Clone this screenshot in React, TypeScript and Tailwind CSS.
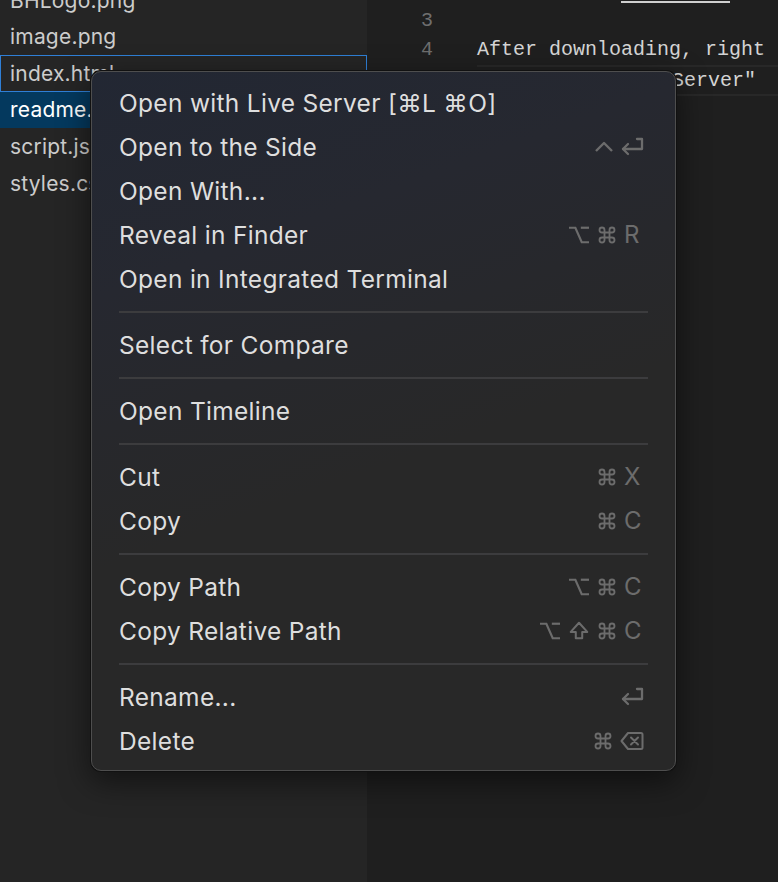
import React from "react";

const G = "#6c6c6c";

function Cmd() {
  return (
    <svg width="20" height="20" viewBox="0 0 24 24" fill="none" stroke={G} strokeWidth="2.2" strokeLinecap="round" strokeLinejoin="round">
      <path d="M15 6v12a3 3 0 1 0 3-3H6a3 3 0 1 0 3 3V6a3 3 0 1 0-3 3h12a3 3 0 1 0-3-3" />
    </svg>
  );
}
function Opt() {
  return (
    <svg width="22" height="20" viewBox="0 0 24 22" fill="none" stroke={G} strokeWidth="2.4" strokeLinejoin="miter">
      <path d="M1 3h7l7 16h8" />
      <path d="M14 3h9" />
    </svg>
  );
}
function Shift() {
  return (
    <svg width="22" height="22" viewBox="0 0 24 24" fill="none" stroke={G} strokeWidth="2.2" strokeLinejoin="round">
      <path d="M8.5 20v-7H3l9-10 9 10h-5.5v7z" />
    </svg>
  );
}
function Ctrl() {
  return (
    <svg width="18" height="12" viewBox="0 0 18 12" fill="none" stroke={G} strokeWidth="2.4" strokeLinejoin="round">
      <path d="M1 10 9 2l8 8" />
    </svg>
  );
}
function Ret() {
  return (
    <svg width="24" height="20" viewBox="0 0 24 20" fill="none" stroke={G} strokeWidth="2.3" strokeLinejoin="round" strokeLinecap="round">
      <path d="M17 2h5v10H3" />
      <path d="M8 7 3 12l5 5" />
    </svg>
  );
}
function Del() {
  return (
    <svg width="24" height="20" viewBox="0 0 24 20" fill="none" stroke={G} strokeWidth="2" strokeLinejoin="round" strokeLinecap="round">
      <path d="M8 2h13a1.5 1.5 0 0 1 1.5 1.5v13A1.5 1.5 0 0 1 21 18H8L1.5 10z" />
      <path d="m11 6.5 7 7M18 6.5l-7 7" />
    </svg>
  );
}
function L({ c }: { c: string }) {
  return <span className="w-[20px] text-[24px] leading-none text-[#6c6c6c] text-left" style={{ fontFamily: "Inter, sans-serif" }}>{c}</span>;
}

type Item = { label: string; keys?: React.ReactNode[] } | "sep";

const items: Item[] = [
  { label: "Open with Live Server [⌘L ⌘O]" },
  { label: "Open to the Side", keys: [<Ctrl />, <Ret />] },
  { label: "Open With..." },
  { label: "Reveal in Finder", keys: [<Opt />, <Cmd />, <L c="R" />] },
  { label: "Open in Integrated Terminal" },
  "sep",
  { label: "Select for Compare" },
  "sep",
  { label: "Open Timeline" },
  "sep",
  { label: "Cut", keys: [<Cmd />, <L c="X" />] },
  { label: "Copy", keys: [<Cmd />, <L c="C" />] },
  "sep",
  { label: "Copy Path", keys: [<Opt />, <Cmd />, <L c="C" />] },
  { label: "Copy Relative Path", keys: [<Opt />, <Shift />, <Cmd />, <L c="C" />] },
  "sep",
  { label: "Rename...", keys: [<Ret />] },
  { label: "Delete", keys: [<Cmd />, <Del />] },
];

const files = ["BHLogo.png", "image.png", "index.html", "readme.md", "script.js", "styles.css"];

export default function App() {
  return (
    <div className="relative w-[778px] h-[882px] overflow-hidden flex bg-[#1f1f1f]" style={{ fontFamily: "Inter, 'Noto Sans', sans-serif" }}>
      {/* Sidebar */}
      <div className="w-[367px] h-full bg-[#252525] shrink-0">
        <div className="mt-[-18px] flex flex-col">
          {files.map((f) => {
            const sel = f === "readme.md";
            const focus = f === "index.html";
            return (
              <div
                key={f}
                className={
                  "h-[36.6px] flex items-center pl-[10px] text-[21px] tracking-[0.2px] " +
                  (sel ? "bg-[#04395e] text-white " : "text-[#cccccc] ") +
                  (focus ? "outline outline-1 -outline-offset-1 outline-[#2f7fd6]" : "")
                }
              >
                {f}
              </div>
            );
          })}
        </div>
      </div>
      {/* Editor */}
      <div className="flex-1 relative" style={{ fontFamily: "'Liberation Mono', monospace" }}>
        <div className="absolute left-[254px] top-[1px] w-[109px] h-[2px] bg-[#cfcfcf]" />
        <div className="pt-[6px] flex flex-col text-[20px]">
          <div className="h-[29px] flex items-center">
            <span className="w-[66px] text-right text-[#6e6e6e]">3</span>
          </div>
          <div className="h-[30px] flex items-center">
            <span className="w-[66px] text-right text-[#6e6e6e]">4</span>
            <span className="ml-[44px] text-[#d4d4d4] whitespace-nowrap">After downloading, right</span>
          </div>
          <div className="h-[31px] flex items-center ml-[110px] pl-[3px] border-y-2 border-[#282828]">
            <span className="text-[#d4d4d4] whitespace-nowrap">"Open with Live Server"</span>
          </div>
        </div>
      </div>

      {/* Context menu */}
      <div className="absolute left-[90px] top-[70px] w-[587px] h-[702px] rounded-[11px] bg-[#111] p-px shadow-[0_10px_30px_rgba(0,0,0,0.5)]">
        <div className="w-full h-full rounded-[10px] border border-[#4e4e4e] bg-[linear-gradient(160deg,#222733_0%,#262830_25%,#282828_55%,#282828_100%)] pt-[9px] flex flex-col">
          {items.map((it, i) =>
            it === "sep" ? (
              <div key={i} className="h-[22px] flex items-center px-[27px]">
                <div className="w-full h-[2px] bg-[#3c3c3e]" />
              </div>
            ) : (
              <div key={i} className="h-[44px] flex items-center justify-between pl-[27px] pr-[31px]">
                <span className="text-[24.5px] text-[#dedede] tracking-[0.3px] whitespace-nowrap">{it.label}</span>
                <span className="flex items-center gap-[7px]">
                  {it.keys?.map((k, j) => (
                    <span key={j} className="flex items-center justify-center">{k}</span>
                  ))}
                </span>
              </div>
            )
          )}
        </div>
      </div>
    </div>
  );
}
